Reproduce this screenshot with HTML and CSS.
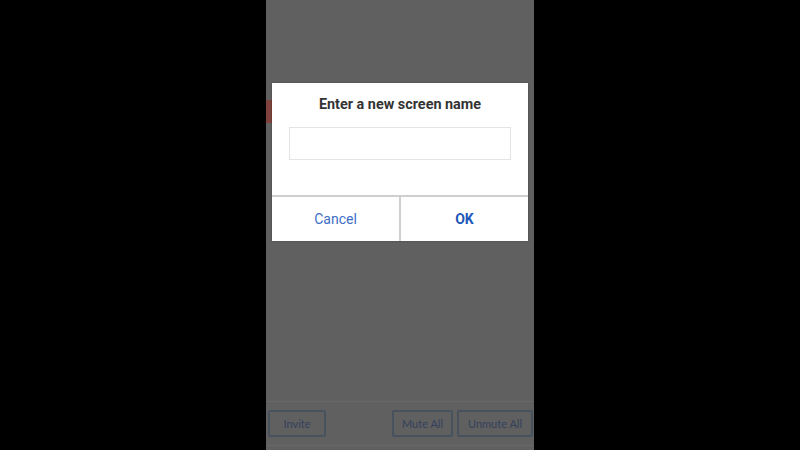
FILE: index.html
```html
<!DOCTYPE html>
<html>
<head>
<meta charset="utf-8">
<link rel="stylesheet" href="styles.css">
</head>
<body>
<div class="phone">
  <div class="content">
    <div class="red-tab"></div>
  </div>
  <div class="toolbar">
    <button class="tbtn">Invite</button>
    <div class="spacer"></div>
    <button class="tbtn">Mute All</button>
    <button class="tbtn">Unmute All</button>
  </div>
  <div class="bottom-line"></div>
  <div class="overlay">
    <div class="dialog">
      <div class="title">Enter a new screen name</div>
      <div class="input"></div>
      <div class="actions">
        <div class="action cancel">Cancel</div>
        <div class="action ok">OK</div>
      </div>
    </div>
  </div>
</div>
</body>
</html>
```

FILE: styles.css
```css
html, body {
  margin: 0;
  padding: 0;
  background: #000;
  width: 800px;
  height: 450px;
  overflow: hidden;
}
.phone {
  position: relative;
  width: 268px;
  height: 450px;
  margin: 0 auto;
  background: #c0c0c0;
  display: flex;
  flex-direction: column;
  font-family: Roboto, "Liberation Sans", sans-serif;
}
.content {
  flex: 1;
  border-bottom: 1px solid #d0d0d0;
  padding-top: 100px;
  box-sizing: border-box;
}
.red-tab {
  width: 40px;
  height: 23px;
  background: #ff8478;
  border-radius: 0 4px 4px 0;
}
.toolbar {
  height: 43px;
  display: flex;
  align-items: center;
  padding: 0 1px 0 2px;
  gap: 4px;
  box-sizing: border-box;
}
.spacer { flex: 1; }
.tbtn {
  height: 27px;
  margin-top: 0;
  background: transparent;
  border: 2px solid #90a4bc;
  border-radius: 2px;
  color: #6a80b8;
  font-family: Lato, "Open Sans", sans-serif;
  font-size: 11px;
  padding: 0;
}
.tbtn:nth-child(1) { width: 58px; }
.tbtn:nth-child(3) { width: 61px; }
.tbtn:nth-child(4) { width: 76px; }
.bottom-line {
  height: 4px;
  border-top: 1px solid #d0d0d0;
}
.overlay {
  position: absolute;
  inset: 0;
  background: rgba(0, 0, 0, 0.5);
  display: flex;
  justify-content: center;
  align-items: flex-start;
  padding-top: 83px;
  box-sizing: border-box;
}
.dialog {
  width: 256px;
  height: 158px;
  background: #fff;
  display: flex;
  flex-direction: column;
  box-shadow: 0 0 2px rgba(0,0,0,0.3);
}
.title {
  text-align: center;
  font-weight: bold;
  font-size: 14.4px;
  color: #333;
  padding-top: 13px;
  height: 30px;
  box-sizing: border-box;
}
.input {
  margin: 14px 17px 0;
  height: 33px;
  border: 1px solid #e4e4e4;
  box-sizing: border-box;
}
.actions {
  margin-top: auto;
  height: 46px;
  border-top: 2px solid #cfcfcf;
  display: flex;
  box-sizing: border-box;
}
.action {
  flex: 1;
  display: flex;
  align-items: center;
  justify-content: center;
  font-size: 14px;
  color: #3e6ec6;
}
.cancel { border-right: 2px solid #cfcfcf; }
.ok { font-weight: bold; color: #2258b8; }
```
